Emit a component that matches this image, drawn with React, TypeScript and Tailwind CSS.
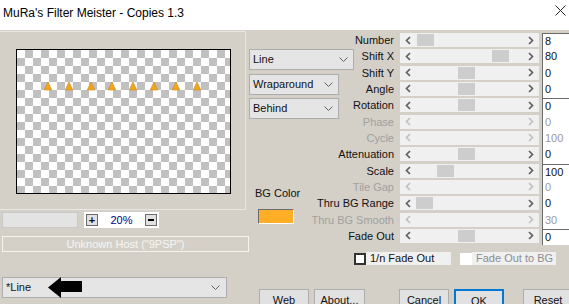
import React from 'react';

type Row = { label: string; pos?: number; value: string; disabled?: boolean; top?: boolean };

const rows: Row[] = [
  { label: 'Number', pos: 17, value: '8', top: true },
  { label: 'Shift X', pos: 92, value: '80' },
  { label: 'Shift Y', pos: 58, value: '0' },
  { label: 'Angle', pos: 58, value: '0' },
  { label: 'Rotation', pos: 58, value: '0', top: true },
  { label: 'Phase', value: '0', disabled: true },
  { label: 'Cycle', value: '100', disabled: true },
  { label: 'Attenuation', pos: 58, value: '0' },
  { label: 'Scale', pos: 37, value: '100', top: true },
  { label: 'Tile Gap', value: '0', disabled: true },
  { label: 'Thru BG Range', pos: 16, value: '0' },
  { label: 'Thru BG Smooth', value: '30', disabled: true },
  { label: 'Fade Out', pos: 58, value: '0', top: true },
];

const triangles = [31, 52, 74, 95, 116, 137, 159, 180];

function Chevron({ dir, disabled }: { dir: 'l' | 'r'; disabled?: boolean }) {
  return (
    <svg width="7" height="9" viewBox="0 0 7 9" className="shrink-0">
      <polyline
        points={dir === 'l' ? '5,1 1.5,4.5 5,8' : '2,1 5.5,4.5 2,8'}
        fill="none"
        stroke={disabled ? '#c0c0c0' : '#606060'}
        strokeWidth="1.7"
      />
    </svg>
  );
}

function Slider({ row }: { row: Row }) {
  return (
    <div className="h-[16.33px] flex items-start">
      <div
        className={`w-[45px] pr-[6px] flex justify-end whitespace-nowrap leading-[14px] ${
          row.disabled ? 'text-[#a0a0a0]' : 'text-[#111]'
        }`}
      >
        {row.label}
      </div>
      <div className="relative w-[139px] h-[14px] bg-[#f0f0f0] flex items-center justify-between px-[5px]">
        <Chevron dir="l" disabled={row.disabled} />
        {row.pos !== undefined && (
          <div
            className="absolute top-[1px] h-[12px] w-[17px] bg-[#cdcdcd]"
            style={{ left: row.pos }}
          />
        )}
        <Chevron dir="r" disabled={row.disabled} />
      </div>
      <div
        className={`ml-[3px] flex-1 h-full bg-white border-l border-[#6b6b6b] pl-[2px] leading-[14px] ${
          row.top ? 'border-t' : ''
        } ${row.disabled ? 'text-[#9a9a9a]' : 'text-[#111]'}`}
      >
        {row.value}
      </div>
    </div>
  );
}

function Combo({ label, w }: { label: string; w: string }) {
  return (
    <div className={`${w} h-[21px] bg-[#e5e5e5] border border-[#adadad] flex items-center justify-between pl-[3px] pr-[5px]`}>
      <span>{label}</span>
      <svg width="9" height="5" viewBox="0 0 9 5">
        <polyline points="0.5,0.5 4.5,4.5 8.5,0.5" fill="none" stroke="#606060" strokeWidth="1" />
      </svg>
    </div>
  );
}

function Button({ label, w, ok }: { label: string; w: string; ok?: boolean }) {
  return (
    <div
      className={`${w} h-[23px] bg-[#e1e1e1] flex justify-center pt-[2px] ${
        ok ? 'border-2 border-[#0078d7] pt-[1px]' : 'border border-[#adadad]'
      }`}
    >
      {label}
    </div>
  );
}

export default function App() {
  return (
    <div className="w-[569px] h-[304px] overflow-hidden bg-[#d4d0c8] text-[11px] font-['Liberation_Sans',Arial,sans-serif] text-[#111]">
      {/* title bar */}
      <div className="h-[30px] bg-white flex items-start justify-between pl-[3px] pr-[2px]">
        <span className="text-[12px] mt-[4px] text-black">MuRa's Filter Meister - Copies 1.3</span>
        <svg width="11" height="11" viewBox="0 0 11 11" className="mt-[5px] mr-[1px]">
          <path d="M0.5 0.5 L10.5 10.5 M10.5 0.5 L0.5 10.5" stroke="#222" strokeWidth="1" />
        </svg>
      </div>

      <div className="flex">
        {/* left side */}
        <div className="w-[249px] shrink-0">
          <div className="mt-[1px] w-[246px] h-[179px] border-t border-r border-b border-[#e8e6e1] pt-[17px] pl-[16px]">
            <div className="w-[215px] h-[145px] border border-black bg-white">
              <svg width="213" height="143" viewBox="0 0 213 143">
                <defs>
                  <pattern id="chk" width="16" height="16" patternUnits="userSpaceOnUse">
                    <rect width="16" height="16" fill="#fff" />
                    <rect x="8" width="8" height="8" fill="#c0c0c0" />
                    <rect y="8" width="8" height="8" fill="#c0c0c0" />
                  </pattern>
                </defs>
                <rect width="213" height="143" fill="url(#chk)" />
                {triangles.map(x => (
                  <polygon
                    key={x}
                    points={`${x},32 ${x + 3.8},40 ${x - 3.8},40`}
                    fill="#f2a51c"
                    stroke="#c98a1c"
                    strokeWidth="0.6"
                  />
                ))}
              </svg>
            </div>
          </div>

          <div className="mt-[2px] pl-[2px] flex items-center h-[16px]">
            <div className="w-[76px] h-[16px] bg-[#e3e3e3] border border-[#c9c9c9]" />
            <div className="ml-[6px] w-[75px] h-[16px] bg-white flex items-center justify-between px-[2px]">
              <div className="w-[12px] h-[12px] border border-[#6b6b6b] bg-[#e1e1e1] flex items-center justify-center font-bold text-[11px] leading-none">+</div>
              <span className="text-[#000080] text-[11px] leading-none">20%</span>
              <div className="w-[12px] h-[12px] border border-[#6b6b6b] bg-[#e1e1e1] flex items-center justify-center">
                <div className="w-[6px] h-[1.5px] bg-black" />
              </div>
            </div>
          </div>

          <div className="mt-[8px] ml-[2px] w-[247px] h-[16px] border border-[#f4f3f0] flex items-center justify-center text-[#f4f4f4] text-[11px] leading-none">
            Unknown Host ("9PSP")
          </div>

          <div className="mt-[25px] ml-[2px] w-[225px] h-[21px] bg-[#e5e5e5] border border-[#adadad] flex items-center pl-[3px] pr-[6px]">
            <span>*Line</span>
            <svg width="34" height="21" viewBox="0 0 34 21" className="ml-[17px] -my-[1px]">
              <polygon points="0,10.5 13,0 13,4 34,4 34,15 13,15 13,21" fill="#000" />
            </svg>
            <div className="flex-1" />
            <svg width="9" height="5" viewBox="0 0 9 5">
              <polyline points="0.5,0.5 4.5,4.5 8.5,0.5" fill="none" stroke="#606060" strokeWidth="1" />
            </svg>
          </div>
        </div>

        {/* right side */}
        <div className="flex-1">
          <div className="flex">
            <div className="w-[106px] shrink-0 pt-[19px]">
              <Combo label="Line" w="w-[105px]" />
              <div className="mt-[4px]">
                <Combo label="Wraparound" w="w-[90px]" />
              </div>
              <div className="mt-[3px]">
                <Combo label="Behind" w="w-[90px]" />
              </div>
              <div className="mt-[68px] pl-[6px] h-[13px] leading-[13px]">BG Color</div>
              <div className="mt-[9px] ml-[9px] w-[36px] h-[15px] bg-[#ffae25] border-t border-l border-[#6b6b6b] border-r-white border-b-white border-r border-b" />
            </div>
            <div className="flex-1 pt-[3px]">
              {rows.map(r => (
                <Slider key={r.label} row={r} />
              ))}
            </div>
          </div>

          <div className="mt-[7px] pl-[105px] flex items-center h-[13px] whitespace-nowrap">
            <div className="w-[12px] h-[12px] bg-white border-2 border-[#333]" />
            <div className="w-[85px] h-[13px] bg-[#f0f0f0] pl-[4px] leading-[13px]">1/n Fade Out</div>
            <div className="ml-[9px] w-[12px] h-[12px] bg-white" />
            <div className="w-[84px] h-[13px] bg-[#f0f0f0] pl-[4px] leading-[13px] text-[#8d8d8d]">Fade Out to BG</div>
          </div>

          <div className="mt-[24px] pl-[10px] flex">
            <Button label="Web" w="w-[50px]" />
            <div className="ml-[5px]"><Button label="About..." w="w-[51px]" /></div>
            <div className="ml-[34px]"><Button label="Cancel" w="w-[50px]" /></div>
            <div className="ml-[5px]"><Button label="OK" w="w-[50px]" ok /></div>
            <div className="ml-[19px]"><Button label="Reset" w="w-[50px]" /></div>
          </div>
        </div>
      </div>
    </div>
  );
}
